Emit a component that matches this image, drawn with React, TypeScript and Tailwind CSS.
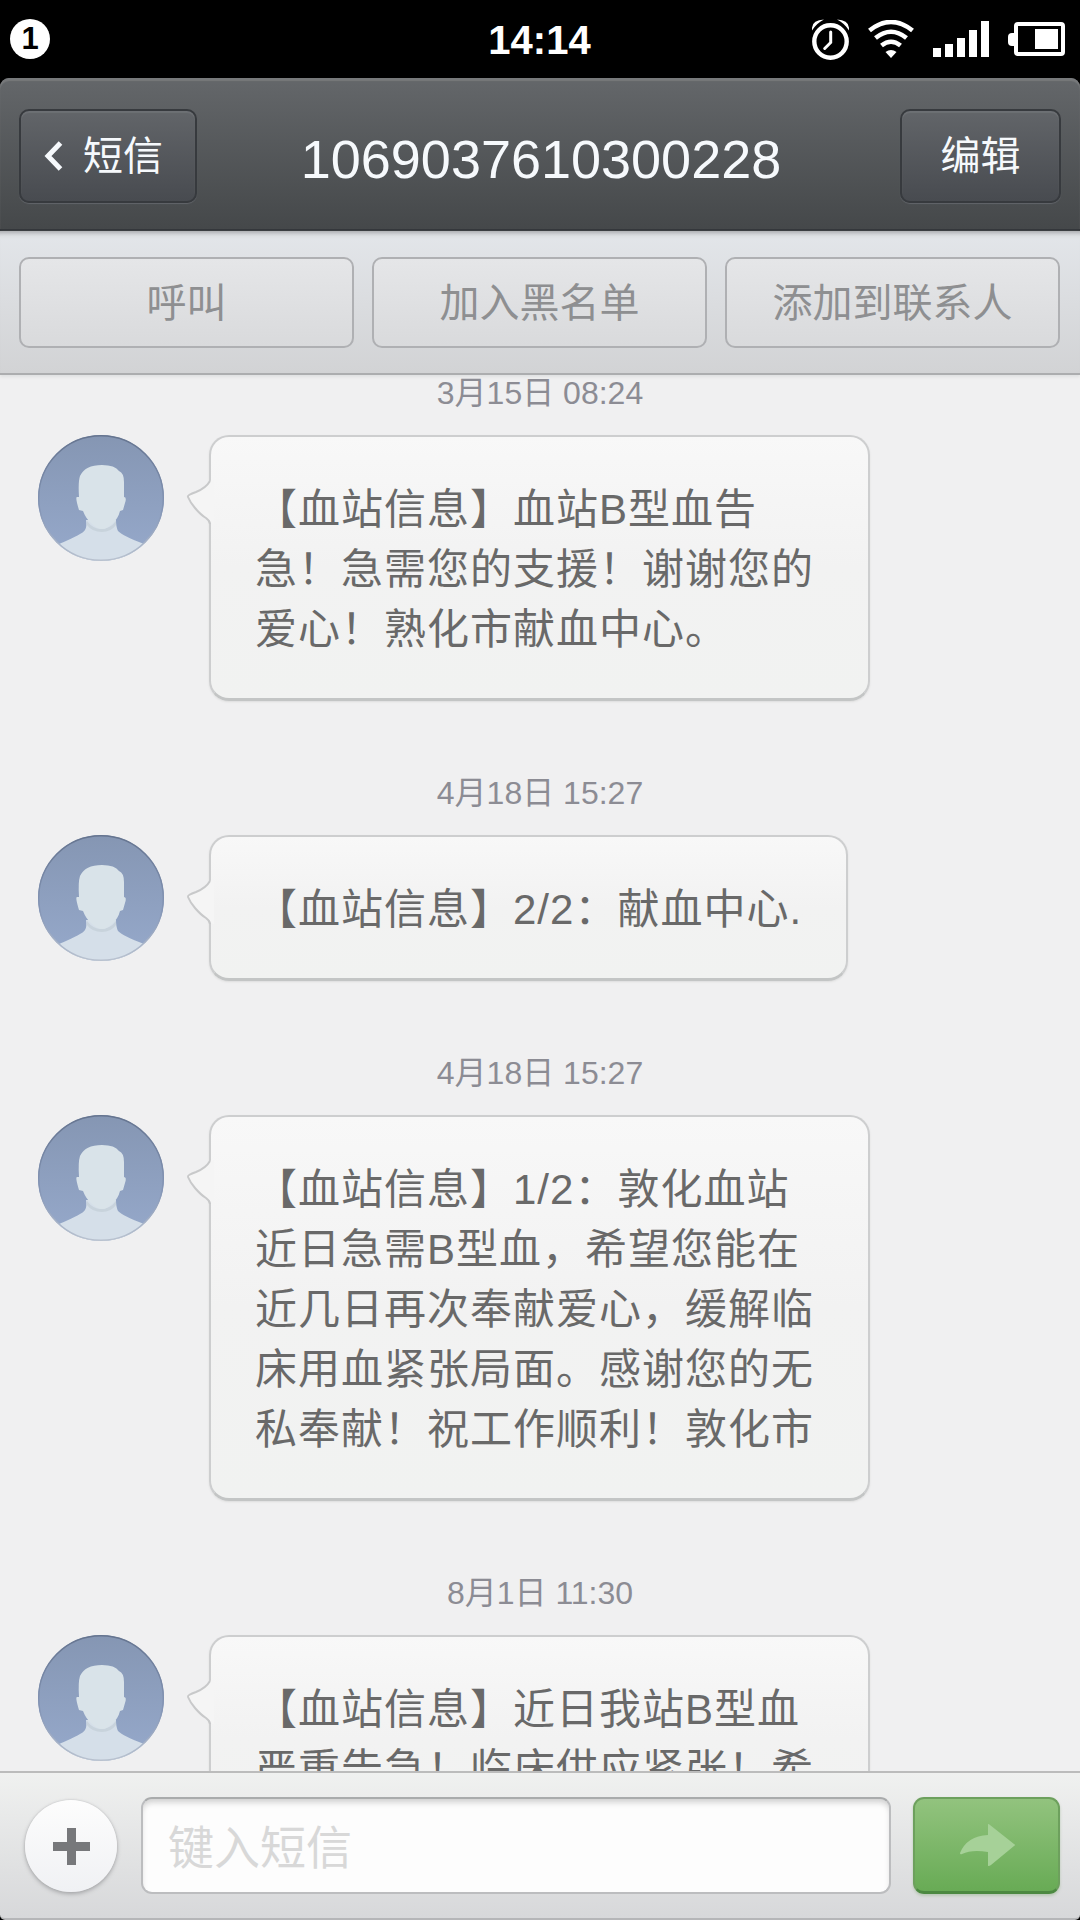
import React from 'react'

interface Message {
    date: string
    lines: string[]
    width: string
}

const MESSAGES: Message[] = [
    {
        date: '3月15日 08:24',
        lines: ['【血站信息】血站B型血告', '急！急需您的支援！谢谢您的', '爱心！熟化市献血中心。'],
        width: 'w-[661px]',
    },
    {
        date: '4月18日 15:27',
        lines: ['【血站信息】2/2：献血中心.'],
        width: 'w-[639px]',
    },
    {
        date: '4月18日 15:27',
        lines: [
            '【血站信息】1/2：敦化血站',
            '近日急需B型血，希望您能在',
            '近几日再次奉献爱心，缓解临',
            '床用血紧张局面。感谢您的无',
            '私奉献！祝工作顺利！敦化市',
        ],
        width: 'w-[661px]',
    },
    {
        date: '8月1日 11:30',
        lines: ['【血站信息】近日我站B型血', '严重告急！临床供应紧张！希'],
        width: 'w-[661px]',
    },
]

const ACTIONS = ['呼叫', '加入黑名单', '添加到联系人']

function StatusBar() {
    return (
        <div className="grid h-[78px] shrink-0 grid-cols-3 items-center bg-black pl-2.5 pr-[15px] text-white">
            <div className="flex size-10 items-center justify-center rounded-full bg-white pb-0.5 text-[31px] font-bold leading-none text-black">1</div>
            <div className="pl-1 pt-0.5 text-center text-[40px] font-bold leading-none">14:14</div>
            <div className="flex items-center justify-end">
                {/* alarm */}
                <svg className="mr-[19px] h-[41px] w-[37px]" viewBox="0 0 37 41" fill="none" stroke="currentColor">
                    <circle cx="18.5" cy="22.5" r="16.2" strokeWidth="4.4" />
                    <path d="M18.7 13v10.5l-6 6" strokeWidth="3" strokeLinecap="round" />
                    <path d="M0 11.500Q-1 1 12 0.600Q5 4 0 11.500ZM37 11.500Q38 1 25 0.600Q32 4 37 11.500Z" fill="currentColor" stroke="none" />
                </svg>
                {/* wifi */}
                <svg className="mr-[19px] h-[38px] w-[46px]" viewBox="0 0 46 38" fill="none" stroke="currentColor" strokeWidth="4.600">
                    <path d="M1.500 10.500Q23-6.500 44.500 10.500" />
                    <path d="M7.500 18Q23 5.500 38.500 18" />
                    <path d="M13.500 25.500Q23 18 32.500 25.500" />
                    <path d="M17.500 32Q23 28 28.500 32L23 38Z" fill="currentColor" stroke="none" />
                </svg>
                {/* signal */}
                <div className="mr-[19px] flex h-9 items-end gap-1">
                    <div className="h-[9px] w-2 bg-white" />
                    <div className="h-[13px] w-2 bg-white" />
                    <div className="h-[19px] w-2 bg-white" />
                    <div className="h-[27px] w-2 bg-white" />
                    <div className="h-9 w-2 bg-white" />
                </div>
                {/* battery */}
                <div className="flex items-center">
                    <div className="h-[13px] w-1.5 rounded-l-sm bg-white" />
                    <div className="flex h-[34px] w-[51px] justify-end rounded-[4px] border-4 border-white p-[3px]">
                        <div className="h-full w-[23px] bg-white" />
                    </div>
                </div>
            </div>
        </div>
    )
}

function Header() {
    return (
        <div className="shrink-0 bg-black">
            <div className="flex h-[153px] items-start border-b-2 border-[#33363a] rounded-t-[9px] bg-linear-to-b from-[#64676a] to-[#45484a] pl-[19px] pr-[19px] pt-[31px] text-[#f6f9fc] shadow-[inset_0_3px_1px_#77797b]">
                <button className="flex h-[94px] w-[178px] shrink-0 items-center rounded-[10px] border-2 border-[#373a3e] bg-linear-to-b from-[#626569] to-[#484b50] pl-[23px] text-[40px] leading-none shadow-[0_1px_1px_#62656a,inset_0_2px_1px_#6d7074]">
                    <svg className="mr-5 h-[30px] w-[19px]" viewBox="0 0 19 30" fill="none" stroke="currentColor" strokeWidth="5">
                        <path d="M16.500 2L4 15l12.500 13" />
                    </svg>
                    短信
                </button>
                <div className="flex-1 pr-[15px] pt-[23px] text-center text-[54px] leading-[54px]">1069037610300228</div>
                <button className="flex h-[94px] w-[161px] shrink-0 items-center justify-center rounded-[10px] border-2 border-[#373a3e] bg-linear-to-b from-[#626569] to-[#484b50] text-[40px] leading-none shadow-[0_1px_1px_#62656a,inset_0_2px_1px_#6d7074]">
                    编辑
                </button>
            </div>
        </div>
    )
}

function Avatar() {
    return (
        <svg className="size-[126px] shrink-0" viewBox="0 0 126 126">
            <defs>
                <linearGradient id="avatarBg" x1="0" y1="0" x2="0" y2="1">
                    <stop offset="0" stopColor="#8596b3" />
                    <stop offset="1" stopColor="#96a9cb" />
                </linearGradient>
                <linearGradient id="avatarRim" x1="0" y1="0" x2="0" y2="1">
                    <stop offset="0" stopColor="#65748f" />
                    <stop offset="0.600" stopColor="#8596b6" />
                    <stop offset="1" stopColor="#b9c2cf" />
                </linearGradient>
                <clipPath id="avatarClip">
                    <circle cx="63" cy="63" r="63" />
                </clipPath>
            </defs>
            <circle cx="63" cy="63" r="63" fill="url(#avatarBg)" />
            <g clipPath="url(#avatarClip)">
                <path d="M21 109Q45 99 47 95Q49 92 48 85H78Q78 92 80 96Q85 101 106 109V126H21Z" fill="#d5dfe9" />
                <path d="M49 86Q55 94 63 94Q72 94 78 86V90Q73 97 64 97Q54 97 49 90Z" fill="#c8d3dc" />
                <path d="M41 62Q40 47 42 41Q47 30 64 30Q77 30 81 36Q86 38 86 47V62Q89 62 87 68L85 75L82 76Q80 84 74 89Q69 94 64 94Q59 94 54 89Q48 84 45 76L41 75Q37 62 39 62Z" fill="#d9e3e9" />
            </g>
            <circle cx="63" cy="63" r="62.300" fill="none" stroke="url(#avatarRim)" strokeWidth="1.400" />
        </svg>
    )
}

function MessageRow({ date, lines, width }: Message) {
    return (
        <div className="mb-[74px]">
            <div className="mb-6 h-9 text-center text-[32px] leading-9 text-[#8c8c94]">{date}</div>
            <div className="flex items-start pl-[38px]">
                <Avatar />
                <div className={`relative ml-[45px] rounded-[20px] border-2 border-b-[3px] border-[#cdcecf] border-b-[#c3c5c5] bg-linear-to-b from-[#f8f8f8] via-[#f2f2f2] to-[#f1f2f1] pb-[38px] pl-11 pt-[43px] shadow-[0_1px_2px_#dddddd] ${width}`}>
                    <svg className="absolute -left-[25px] top-[43px] h-[44px] w-[28px]" viewBox="0 0 28 44">
                        <path d="M28 0L24 1Q20 8 10 12Q1 15 2 17Q4 22 9 28Q15 35 20 38Q25 41 24 43L28 44Z" fill="#f5f5f5" />
                        <path d="M24 1Q20 8 10 12Q1 15 2 17Q4 22 9 28Q15 35 20 38Q24 41 24 44" fill="none" stroke="#c8c9ca" strokeWidth="2" />
                    </svg>
                    {lines.map((line) => (
                        <p key={line} className="whitespace-nowrap text-[42px] leading-[60px] tracking-[1px] text-[#696969]">{line}</p>
                    ))}
                </div>
            </div>
        </div>
    )
}

function Composer() {
    return (
        <div className="shrink-0 bg-black">
            <div className="flex h-[149px] items-start rounded-b-[5px] border-b-2 border-t-2 border-b-[#b5b6b8] border-t-[#bcbcbc] bg-linear-to-b from-[#f0f1f0] to-[#d7d8da] pl-[25px] pr-5 pt-6">
                <button className="mr-6 mt-[3px] flex size-[92px] items-center justify-center rounded-full bg-linear-to-b from-[#fdfdfd] to-[#f0f1f4] shadow-[0_2px_4px_#a5a6a8,0_0_2px_#c5c5c7]">
                    <svg className="h-[37px] w-[37px]" viewBox="0 0 37 37" fill="#77787b">
                        <path d="M14 0h9v14h14v9H23v14h-9V23H0v-9h14z" />
                    </svg>
                </button>
                <div className="mr-[22px] flex h-[97px] w-[750px] items-center rounded-[11px] border-2 border-[#bcbdbf] border-t-[#a9abac] bg-[#fdfdfd] pl-[25px] pt-1 text-[46px] leading-none text-[#d8d8d8] shadow-[inset_0_5px_6px_-2px_#cccccc]">
                    键入短信
                </div>
                <button className="flex h-[97px] w-[147px] items-center justify-center rounded-[11px] border-2 border-b-[3px] border-[#6da05d] border-b-[#4c8941] bg-linear-to-b from-[#92c37e] to-[#68ab55] pl-0.5 shadow-[0_2px_3px_#b9c8b5]">
                    <svg className="h-[42px] w-[56px]" viewBox="0 0 56 42">
                        <path d="M28 0Q29 0 30 1L54 20Q56 21 54 22L31 41Q30 42 28 42V28Q12 25 2 30Q0 31 0 29Q7 12 28 11Z" fill="#a6d198" />
                    </svg>
                </button>
            </div>
        </div>
    )
}

export default function App() {
    return (
        <div className="flex h-[1920px] w-[1080px] flex-col overflow-hidden bg-[#f0f0f1] font-['Liberation_Sans','Noto_Sans_CJK_SC',sans-serif]">
            <StatusBar />
            <Header />
            <div className="flex h-[144px] shrink-0 items-start gap-[18px] border-b-2 border-[#acadaf] bg-linear-to-b from-[#e3e6ea] to-[#d2d3d5] pl-[19px] pr-5 pt-[26px] shadow-[inset_0_7px_5px_-5px_#a4a5a8,0_2px_3px_#dfe0e1]">
                {ACTIONS.map((label) => (
                    <button
                        key={label}
                        className="h-[91px] flex-1 rounded-[10px] border-2 border-[#afb0b3] bg-linear-to-b from-[#e5e6e8] to-[#d9dadc] text-[40px] leading-none text-[#8e8f91]"
                    >
                        {label}
                    </button>
                ))}
            </div>
            <div className="min-h-0 flex-1 overflow-hidden">
                {MESSAGES.map((message, idx) => (
                    <MessageRow key={idx} {...message} />
                ))}
            </div>
            <Composer />
        </div>
    )
}
